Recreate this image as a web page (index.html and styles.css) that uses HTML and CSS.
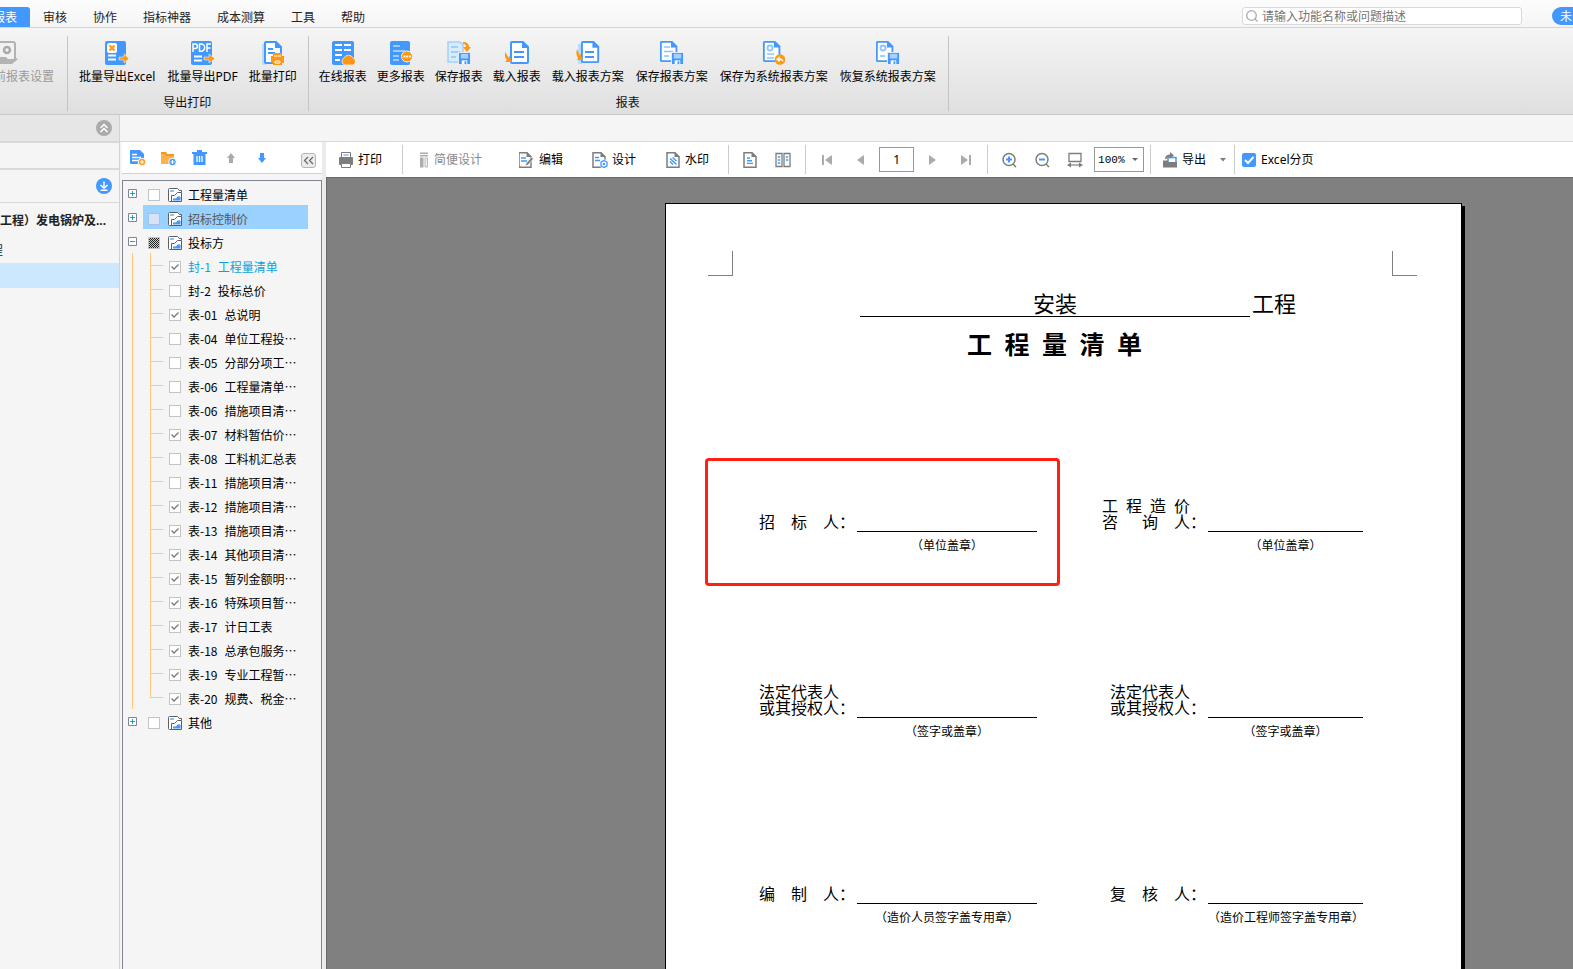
FILE: index.html
```html
<!DOCTYPE html>
<html lang="zh-CN">
<head>
<meta charset="utf-8">
<title>报表</title>
<link rel="stylesheet" href="styles.css">
</head>
<body>
<svg class="defs" aria-hidden="true">
  <symbol id="i-doc" viewBox="0 0 24 24"><path d="M3 1h11l5 5v15a1 1 0 0 1-1 1H3a1 1 0 0 1-1-1V2a1 1 0 0 1 1-1z" fill="#fff" stroke="#4398fd" stroke-width="2"/><path d="M13 0v7h7z" fill="#4398fd"/></symbol>
  <symbol id="i-disk" viewBox="0 0 14 14"><path d="M0 0h14v14H0z" fill="#f0f0f0"/><path d="M1 1h12v12H1z" fill="#4398fd"/><path d="M3 2h8v5H3z" fill="#a5d0ff"/><path d="M4 9h6v4H4z" fill="#fff"/><path d="M7 10h2v3H7z" fill="#4398fd"/></symbol>
  <symbol id="i-page" viewBox="0 0 16 16"><path d="M2 .8h8l4 4v10.400H2z" fill="#fff" stroke="#7d7d7d" stroke-width="1.500"/><path d="M9.500 0v5H15z" fill="#7d7d7d"/></symbol>
  <symbol id="i-chart" viewBox="0 0 14 14"><path d="M13.500 4.500v-2h-2l-2-2h-8a1 1 0 0 0-1 1v11a1 1 0 0 0 1 1h3" fill="#fff" stroke="#5c6066"/><path d="M2 2h4v2H2z" fill="#8cc4ff"/><path d="M3.500 13.500v-6h3l3-3h4v9z" fill="#fff" stroke="#5c6066"/><path d="M5 12.500V10.500h3L9.500 8.500h3v4z" fill="#4398fd"/></symbol>
</svg>

<header class="menubar">
  <nav class="tabs">
    <button class="tab tab-active">报表</button>
    <button class="tab">审核</button>
    <button class="tab">协作</button>
    <button class="tab">指标神器</button>
    <button class="tab">成本测算</button>
    <button class="tab">工具</button>
    <button class="tab">帮助</button>
  </nav>
  <label class="search">
    <svg width="12" height="12" viewBox="0 0 12 12" fill="none" stroke="#aaa" stroke-width="1.300"><circle cx="5.500" cy="5.500" r="4.800"/><path d="M9 9l2.500 2.500"/></svg>
    <input type="text" placeholder="请输入功能名称或问题描述" aria-label="搜索">
  </label>
  <button class="login">未</button>
</header>

<section class="ribbon">
  <div class="group">
    <div class="tools">
      <button class="tool tool-cut" disabled>
        <svg width="24" height="24" viewBox="0 0 24 24"><path d="M4 1h15a2 2 0 0 1 2 2v16H4z" fill="#f2f2f2" stroke="#b3b3b3" stroke-width="2"/><circle cx="13" cy="9" r="3" fill="none" stroke="#aaa" stroke-width="2.500"/><path d="M4 16h8l3 3 7-2 2 1-6 5H4z" fill="#b3b3b3"/></svg>
        <span>前报表设置</span>
      </button>
    </div>
    <div class="caption"></div>
  </div>
  <div class="group">
    <div class="tools">
      <button class="tool wide">
        <svg width="24" height="24" viewBox="0 0 24 24"><rect width="21" height="24" rx="2" fill="#4398fd"/><rect x="2" y="2" width="10" height="10" rx="2" fill="#fff"/><path d="M4.500 4.500l5 5m0-5l-5 5" stroke="#ff9712" stroke-width="2.200"/><path d="M3 14.500h8M3 18.500h8" stroke="#fff" stroke-width="2"/><path d="M14 16h5v-3l5 4.500-5 4.500v-3h-5z" fill="#ff9712" stroke="#fff" stroke-width=".5"/></svg>
        <span>批量导出Excel</span>
      </button>
      <button class="tool wide">
        <svg width="24" height="24" viewBox="0 0 24 24"><rect width="21" height="24" rx="2" fill="#4398fd"/><g fill="none" stroke="#fff" stroke-width="1.500"><path d="M2 11V3h2.200a2.200 2.200 0 0 1 0 4.500H2M8.500 3v7.200h1.600a3.500 3.500 0 0 0 0-7.200zM16 11V3h4M16 7h3.500"/></g><path d="M3 15.500h8M3 19.500h8" stroke="#fff" stroke-width="2"/><path d="M13 16h5v-3l6 4.500-6 4.500v-3h-5z" fill="#ff9712" stroke="#fff" stroke-width=".5"/></svg>
        <span>批量导出PDF</span>
      </button>
      <button class="tool">
        <svg width="24" height="24" viewBox="0 0 24 24"><path d="M1 3h4v21H2a1 1 0 0 1-1-1z" fill="#b9dcff"/><path d="M5 1h10l5 5v16H5a1 1 0 0 1-1-1V2a1 1 0 0 1 1-1z" fill="#fff" stroke="#4398fd" stroke-width="2"/><path d="M14 0v7h7z" fill="#4398fd"/><path d="M7 8h5M7 12h7" stroke="#4398fd" stroke-width="2"/><path d="M12 12h9v3h2v7h-2v2h-9v-2h-2v-7h2z" fill="#ff9712"/><path d="M13 15h7M14 20h5v2h-5z" stroke="#fff" fill="none"/></svg>
        <span>批量打印</span>
      </button>
    </div>
    <div class="caption">导出打印</div>
  </div>
  <div class="group">
    <div class="tools">
      <button class="tool">
        <svg width="24" height="24" viewBox="0 0 24 24"><rect x="1" width="22" height="24" rx="2" fill="#4398fd"/><path d="M4 4h7M13 4h7M4 9h7M13 9h7M4 14h7M4 19h5" stroke="#fff" stroke-width="2"/><path d="M14 24a3.700 3.700 0 0 1-1-7 5 5 0 0 1 9 0 3.700 3.700 0 0 1 0 7z" fill="#ff9712" stroke="#f0f0f0" stroke-width=".8"/></svg>
        <span>在线报表</span>
      </button>
      <button class="tool">
        <svg width="24" height="24" viewBox="0 0 24 24"><rect x="1" width="20" height="24" rx="2" fill="#4398fd"/><path d="M4 5h7M4 10h12M4 15h6M4 19h6" stroke="#b9dcff" stroke-width="1.600"/><circle cx="18" cy="15.500" r="5.500" fill="#ff9712" stroke="#f0f0f0"/><path d="M14.500 15.500h2m.7 0h2m.7 0h2" stroke="#fff" stroke-width="2"/></svg>
        <span>更多报表</span>
      </button>
      <button class="tool">
        <svg width="24" height="24" viewBox="0 0 24 24"><path d="M1 1h12l3 3v17H1z" fill="#d8ecff" stroke="#a5cffb" stroke-width="1.500"/><path d="M4 6h7M4 11h9M4 16h5" stroke="#8cc4ff" stroke-width="1.600"/><path d="M16 1c4 0 6 2 6 5h2l-4 5-4-5h3c0-2-1-3-3-3z" fill="#ff9712"/><use href="#i-disk" x="11" y="11" width="13" height="13"/></svg>
        <span>保存报表</span>
      </button>
      <button class="tool">
        <svg width="24" height="24" viewBox="0 0 24 24"><use href="#i-doc" x="4" width="24" height="24"/><path d="M9 11h10M9 16h10" stroke="#4398fd" stroke-width="2"/><path d="M0 11l4 6V14l3 7H0l2-2c-2-2-3-5-2-8z" fill="#ff9712"/></svg>
        <span>载入报表</span>
      </button>
      <button class="tool wide">
        <svg width="24" height="24" viewBox="0 0 24 24"><path d="M2 3h4v20H2z" fill="#b9dcff"/><use href="#i-doc" x="4" width="23" height="23"/><path d="M9 11h9M9 16h9" stroke="#4398fd" stroke-width="2"/><path d="M1 8l3 7v-3l3 7H1l1-2c-2-3-2-6-1-9z" fill="#ff9712"/></svg>
        <span>载入报表方案</span>
      </button>
      <button class="tool wide">
        <svg width="24" height="24" viewBox="0 0 24 24"><use href="#i-doc" x="-1" width="22" height="22"/><path d="M4 6h6M4 10.500h9M4 15h5" stroke="#8cc4ff" stroke-width="1.600"/><use href="#i-disk" x="11" y="11" width="13" height="13"/></svg>
        <span>保存报表方案</span>
      </button>
      <button class="tool wide">
        <svg width="24" height="24" viewBox="0 0 24 24"><use href="#i-doc" x="0" width="22" height="22"/><circle cx="8" cy="7" r="2.500" fill="none" stroke="#8cc4ff" stroke-width="1.800"/><path d="M5 13h7M5 17h7" stroke="#8cc4ff" stroke-width="1.600"/><circle cx="18" cy="18.500" r="5.300" fill="#ff9712"/><path d="M14 18.200l3.500-3v2c2.500 0 4 1.300 4 4-1-1.500-2-2-4-2v2z" fill="#fff"/></svg>
        <span>保存为系统报表方案</span>
      </button>
      <button class="tool wide">
        <svg width="24" height="24" viewBox="0 0 24 24"><use href="#i-doc" x="-1" width="22" height="22"/><circle cx="7" cy="7" r="2.500" fill="none" stroke="#8cc4ff" stroke-width="1.800"/><path d="M4 15h5" stroke="#8cc4ff" stroke-width="1.600"/><use href="#i-disk" x="11" y="11" width="13" height="13"/></svg>
        <span>恢复系统报表方案</span>
      </button>
    </div>
    <div class="caption">报表</div>
  </div>
</section>

<main class="workspace">
  <aside class="sidebar">
    <div class="side-head">
      <button class="round round-grey" aria-label="收起"><svg width="16" height="16" viewBox="0 0 16 16" fill="none" stroke="#fff" stroke-width="1.500"><path d="M4.500 8L8 4.500 11.500 8M4.500 12L8 8.500l3.500 3.500"/></svg></button>
    </div>
    <div class="side-blank"></div>
    <div class="side-load">
      <button class="round round-blue" aria-label="下载"><svg width="16" height="16" viewBox="0 0 16 16" fill="none" stroke="#fff" stroke-width="1.500"><path d="M8 3.500v6.500M4.500 7L8 10.200 11.500 7M4.500 12.200h7"/></svg></button>
    </div>
    <ul class="projects">
      <li class="project project-root">工程）发电锅炉及...</li>
      <li class="project project-cut">程</li>
      <li class="project project-selected"></li>
    </ul>
  </aside>

  <div class="content">
    <div class="strip"></div>
    <div class="panes">
      <section class="tree-pane">
        <div class="tree-tools">
          <button class="icon-btn" aria-label="新建报表"><svg width="16" height="16" viewBox="0 0 16 16"><path d="M0 0h10l4 4v10H1a1 1 0 0 1-1-1z" fill="#4398fd"/><path d="M2 4.500h5M2 7.500h9M2 10.500h6" stroke="#fff" stroke-width="1.300"/><circle cx="12" cy="12" r="3.800" fill="#ff9712" stroke="#fff"/><path d="M12 10v4M10 12h4" stroke="#fff" stroke-width="1.200"/></svg></button>
          <button class="icon-btn" aria-label="新建文件夹"><svg width="16" height="16" viewBox="0 0 16 16"><path d="M0 2h5l1 2h7v10H0z" fill="#ffb14d"/><path d="M0 2h5l1 2h7v2H5L4 4H0z" fill="#ff9712"/><circle cx="11.500" cy="12" r="3.800" fill="#4398fd" stroke="#fff"/><path d="M11.500 10v4M9.500 12h4" stroke="#fff" stroke-width="1.200"/></svg></button>
          <button class="icon-btn" aria-label="删除"><svg width="16" height="16" viewBox="0 0 16 16" fill="#4398fd"><path d="M0 2h5V0h5v2h5v2H0z"/><path d="M1.500 4h12v11h-12z"/><path d="M5 6v6M7.500 6v6M10 6v6" stroke="#fff" stroke-width="1.300"/></svg></button>
          <button class="icon-btn" aria-label="上移"><svg width="16" height="16" viewBox="0 0 16 16"><path d="M8 3l4 5h-2v5H6V8H4z" fill="#ababab"/></svg></button>
          <button class="icon-btn" aria-label="下移"><svg width="16" height="16" viewBox="0 0 16 16"><path d="M8 13L4 8h2V3h4v5h2z" fill="#4398fd"/></svg></button>
          <button class="collapse" aria-label="折叠"><svg width="13" height="13" viewBox="0 0 13 13" fill="none" stroke="#666" stroke-width="1.200"><path d="M6 3L2.500 6.500 6 10M11 3L7.500 6.500 11 10"/></svg></button>
        </div>
        <div class="tree">
          <div class="node"><button class="expander" aria-label="展开"><svg width="9" height="9" viewBox="0 0 9 9"><path d="M.5.5h8v8h-8z" fill="#fff" stroke="#7f8794"/><path d="M2 4.500h5M4.500 2v5" stroke="#18a5d6"/></svg></button><label class="node-label"><input type="checkbox" class="tick"><svg width="14" height="14"><use href="#i-chart"/></svg><span>工程量清单</span></label></div>
          <div class="node node-selected"><button class="expander" aria-label="展开"><svg width="9" height="9" viewBox="0 0 9 9"><path d="M.5.5h8v8h-8z" fill="#fff" stroke="#7f8794"/><path d="M2 4.500h5M4.500 2v5" stroke="#18a5d6"/></svg></button><label class="node-label"><input type="checkbox" class="tick"><svg width="14" height="14"><use href="#i-chart"/></svg><span>招标控制价</span></label></div>
          <div class="node"><button class="expander" aria-label="折叠"><svg width="9" height="9" viewBox="0 0 9 9"><path d="M.5.5h8v8h-8z" fill="#fff" stroke="#7f8794"/><path d="M2 4.500h5" stroke="#18a5d6"/></svg></button><label class="node-label"><input type="checkbox" class="tick tick-mixed"><svg width="14" height="14"><use href="#i-chart"/></svg><span>投标方</span></label></div>
          <ul class="leaves">
            <li><label class="leaf leaf-current"><input type="checkbox" class="tick" checked><span>封-1</span> <span>工程量清单</span></label></li>
            <li><label class="leaf"><input type="checkbox" class="tick"><span>封-2</span> <span>投标总价</span></label></li>
            <li><label class="leaf"><input type="checkbox" class="tick" checked><span>表-01</span> <span>总说明</span></label></li>
            <li><label class="leaf"><input type="checkbox" class="tick"><span>表-04</span> <span>单位工程投…</span></label></li>
            <li><label class="leaf"><input type="checkbox" class="tick"><span>表-05</span> <span>分部分项工…</span></label></li>
            <li><label class="leaf"><input type="checkbox" class="tick"><span>表-06</span> <span>工程量清单…</span></label></li>
            <li><label class="leaf"><input type="checkbox" class="tick"><span>表-06</span> <span>措施项目清…</span></label></li>
            <li><label class="leaf"><input type="checkbox" class="tick" checked><span>表-07</span> <span>材料暂估价…</span></label></li>
            <li><label class="leaf"><input type="checkbox" class="tick"><span>表-08</span> <span>工料机汇总表</span></label></li>
            <li><label class="leaf"><input type="checkbox" class="tick"><span>表-11</span> <span>措施项目清…</span></label></li>
            <li><label class="leaf"><input type="checkbox" class="tick" checked><span>表-12</span> <span>措施项目清…</span></label></li>
            <li><label class="leaf"><input type="checkbox" class="tick" checked><span>表-13</span> <span>措施项目清…</span></label></li>
            <li><label class="leaf"><input type="checkbox" class="tick" checked><span>表-14</span> <span>其他项目清…</span></label></li>
            <li><label class="leaf"><input type="checkbox" class="tick" checked><span>表-15</span> <span>暂列金额明…</span></label></li>
            <li><label class="leaf"><input type="checkbox" class="tick" checked><span>表-16</span> <span>特殊项目暂…</span></label></li>
            <li><label class="leaf"><input type="checkbox" class="tick" checked><span>表-17</span> <span>计日工表</span></label></li>
            <li><label class="leaf"><input type="checkbox" class="tick" checked><span>表-18</span> <span>总承包服务…</span></label></li>
            <li><label class="leaf"><input type="checkbox" class="tick" checked><span>表-19</span> <span>专业工程暂…</span></label></li>
            <li><label class="leaf"><input type="checkbox" class="tick" checked><span>表-20</span> <span>规费、税金…</span></label></li>
          </ul>
          <div class="node"><button class="expander" aria-label="展开"><svg width="9" height="9" viewBox="0 0 9 9"><path d="M.5.5h8v8h-8z" fill="#fff" stroke="#7f8794"/><path d="M2 4.500h5M4.500 2v5" stroke="#18a5d6"/></svg></button><label class="node-label"><input type="checkbox" class="tick"><svg width="14" height="14"><use href="#i-chart"/></svg><span>其他</span></label></div>
        </div>
      </section>

      <section class="viewer">
        <div class="toolbar">
          <div class="bar-group bar-print">
            <button class="bar-btn"><svg width="16" height="16" viewBox="0 0 16 16"><path d="M3.500.5h9v5h-9z" fill="#fff" stroke="#7d7d7d"/><path d="M5.500 3h5" stroke="#4398fd"/><rect x="1" y="5" width="14" height="8" rx="1" fill="#7d7d7d"/><path d="M3.500 11.500h9v4h-9z" fill="#fff" stroke="#7d7d7d"/></svg>打印</button>
          </div>
          <div class="bar-group bar-edit">
            <button class="bar-btn bar-first" disabled><svg width="16" height="16" viewBox="0 0 16 16"><path d="M6 .5h8v1.500H6zM6 3h8v1.500H6zM6 5.500h3.500v10H6z" fill="#ababab"/><path d="M11 6h2.500v9H11z" fill="#eee" stroke="#bbb"/></svg>简便设计</button>
            <button class="bar-btn"><svg width="16" height="16" viewBox="0 0 16 16"><use href="#i-page" x="-2" width="16" height="16"/><path d="M2 6h5M2 9h6" stroke="#4398fd" stroke-width="1.400"/><path d="M7 11.500L12.500 5l2 1.800L9 13l-3 1z" fill="#7d7d7d" stroke="#fff" stroke-width=".7"/></svg>编辑</button>
            <button class="bar-btn"><svg width="16" height="16" viewBox="0 0 16 16"><use href="#i-page" x="-1" width="16" height="16"/><path d="M3 5.500h4M3 8.500h5" stroke="#4398fd" stroke-width="1.400"/><circle cx="12" cy="12" r="4.500" fill="#fff"/><path d="M12 8.500l3 1.700v3.600l-3 1.700-3-1.700v-3.600z" fill="#fff" stroke="#4398fd" stroke-width="1.300"/><circle cx="12" cy="12" r="1.200" fill="#4398fd"/></svg>设计</button>
            <button class="bar-btn"><svg width="16" height="16" viewBox="0 0 16 16"><use href="#i-page" width="16" height="16"/><path d="M5 6.500l6.500 6M5 9.500l3 3M7.500 5.500l4 3.500" stroke="#4398fd" stroke-width="1.500"/></svg>水印</button>
          </div>
          <div class="bar-group bar-view">
            <button class="icon-btn" aria-label="单页"><svg width="16" height="16" viewBox="0 0 16 16"><use href="#i-page" width="16" height="16"/><path d="M5 6h3M5 8.700h5M5 11.400h6" stroke="#4398fd" stroke-width="1.400"/></svg></button>
            <button class="icon-btn" aria-label="双页"><svg width="16" height="16" viewBox="0 0 16 16"><path d="M1 1.500h6v13H1zM9 1.500h6v13H9z" fill="#fff" stroke="#7d7d7d" stroke-width="1.300"/><path d="M2.800 5h2.400M2.800 8h2.400M2.800 11h2.400M10.800 5h2.400M10.800 8h2.400" stroke="#4398fd" stroke-width="1.300"/></svg></button>
          </div>
          <div class="bar-group bar-pages">
            <button class="icon-btn" aria-label="首页"><svg width="16" height="16" viewBox="0 0 16 16" fill="#ababab"><path d="M3 3h2v10H3zM13 3v10L6 8z"/></svg></button>
            <button class="icon-btn" aria-label="上一页"><svg width="16" height="16" viewBox="0 0 16 16" fill="#ababab"><path d="M12 3v10L5 8z"/></svg></button>
            <input class="page-no" type="text" value="1" aria-label="页码">
            <button class="icon-btn" aria-label="下一页"><svg width="16" height="16" viewBox="0 0 16 16" fill="#ababab"><path d="M4 3v10l7-5z"/></svg></button>
            <button class="icon-btn" aria-label="末页"><svg width="16" height="16" viewBox="0 0 16 16" fill="#ababab"><path d="M3 3v10l7-5zM11 3h2v10h-2z"/></svg></button>
          </div>
          <div class="bar-group bar-zoom">
            <button class="icon-btn" aria-label="放大"><svg width="16" height="16" viewBox="0 0 16 16" fill="none" stroke="#7d7d7d" stroke-width="1.500"><circle cx="8" cy="7.500" r="6"/><path d="M12 12l3 3"/><path d="M5 7.500h6M8 4.500v6" stroke="#4398fd" stroke-width="2"/></svg></button>
            <button class="icon-btn" aria-label="缩小"><svg width="16" height="16" viewBox="0 0 16 16" fill="none" stroke="#7d7d7d" stroke-width="1.500"><circle cx="8" cy="7.500" r="6"/><path d="M12 12l3 3"/><path d="M5 7.500h6" stroke="#4398fd" stroke-width="2"/></svg></button>
            <button class="icon-btn" aria-label="适合宽度"><svg width="16" height="16" viewBox="0 0 16 16"><path d="M2 1.500h12v8H2z" fill="#fff" stroke="#7d7d7d" stroke-width="1.300"/><path d="M0 13l4-2.500v5zM16 13l-4-2.500v5z" fill="#7d7d7d"/><path d="M3 13h10" stroke="#7d7d7d" stroke-width="1.200"/></svg></button>
            <select class="zoom" aria-label="缩放"><option>100%</option></select>
          </div>
          <div class="bar-group bar-export">
            <button class="bar-btn"><svg width="16" height="16" viewBox="0 0 16 16"><path d="M6 9V5.500h8V10" fill="none" stroke="#4398fd" stroke-width="1.500"/><path d="M3 7c0-3 2-4.500 5-4.500V0l4 3.500L8 6.500V4.700C6 4.700 5 5.500 4.500 7z" fill="#7d7d7d"/><path d="M1 8.500h5l1 1.500h8v5.500H1z" fill="#7d7d7d"/></svg>导出</button>
            <button class="caret" aria-label="更多导出"><svg width="6" height="4" viewBox="0 0 6 4"><path d="M0 0h6L3 3.500z" fill="#7d7d7d"/></svg></button>
          </div>
          <label class="bar-excel"><input type="checkbox" checked>Excel分页</label>
        </div>

        <div class="desk">
          <article class="paper">
            <div class="marks"><i class="mark mark-left"></i><i class="mark mark-right"></i></div>
            <div class="subject"><span class="subject-name">安装</span><span>工程</span></div>
            <h1 class="title">工&ensp;程&ensp;量&ensp;清&ensp;单</h1>
            <div class="signs">
              <div class="role">招　标　人：</div>
              <div class="line"></div>
              <div class="role role-right">工&ensp;程&ensp;造&ensp;价<br>咨　&ensp;询　人：</div>
              <div class="line"></div>
              <div class="note note-left">（单位盖章）</div>
              <div class="note note-right">（单位盖章）</div>

              <div class="role">法定代表人<br>或其授权人：</div>
              <div class="line"></div>
              <div class="role role-right">法定代表人<br>或其授权人：</div>
              <div class="line"></div>
              <div class="note note-left">（签字或盖章）</div>
              <div class="note note-right">（签字或盖章）</div>

              <div class="role">编　制　人：</div>
              <div class="line"></div>
              <div class="role role-right">复　核　人：</div>
              <div class="line"></div>
              <div class="note note-left">（造价人员签字盖专用章）</div>
              <div class="note note-right">（造价工程师签字盖专用章）</div>
            </div>
            <div class="highlight"></div>
          </article>
        </div>
      </section>
    </div>
  </div>
</main>
</body>
</html>
```

FILE: styles.css
```css
* { box-sizing: border-box; }

body {
  margin: 0;
  height: 100vh;
  overflow: hidden;
  display: flex;
  flex-direction: column;
  background: #f5f5f5;
  color: #000;
  font: 12px/16px "Noto Sans", "Noto Sans CJK SC", sans-serif;
}

button, input, select { font: inherit; color: inherit; }
button { padding: 0; border: 0; background: none; white-space: nowrap; }
ul { list-style: none; margin: 0; padding: 0; }
svg { display: block; flex: none; }
.defs { position: absolute; width: 0; height: 0; }

/* Menu bar */
.menubar {
  flex: none;
  display: flex;
  align-items: flex-end;
  height: 28px;
  border-bottom: 1px solid #d5d5d5;
  background: linear-gradient(#fcfcfc, #f5f5f5);
}
.tabs { flex: 1; display: flex; }
.tab { height: 20px; padding: 2px 13px 0; color: #222; }
.tab-active {
  margin-left: -20px;
  border-radius: 3px 3px 0 0;
  background: #4398fd;
  color: #fff;
}
.search {
  display: flex;
  align-items: center;
  gap: 4px;
  width: 280px;
  height: 18px;
  margin: 0 30px 2px 0;
  padding-left: 3px;
  border: 1px solid #d9d9d9;
  border-radius: 3px;
  background: #fff;
}
.search input { flex: 1; min-width: 0; height: 16px; padding: 1px 0 0; border: 0; outline: 0; background: none; }
.search input::placeholder { color: #757575; opacity: 1; }
.login {
  width: 21px;
  height: 18px;
  margin-bottom: 2px;
  padding: 1px 0 0 8px;
  border-radius: 9px 0 0 9px;
  background: #4398fd;
  color: #fff;
  text-align: left;
}

/* Ribbon */
.ribbon {
  flex: none;
  display: flex;
  height: 87px;
  padding: 8px 0 3px;
  border-bottom: 1px solid #c9c9c9;
  background: linear-gradient(#f5f5f5, #dfdfdf);
}
.group {
  display: flex;
  flex-direction: column;
  padding: 5px 6px 0 5px;
  border-right: 1px solid #c4c4c4;
}
.group:first-child { padding: 5px 13px 0 0; }
.tools { display: flex; }
.tool {
  display: flex;
  flex-direction: column;
  align-items: center;
  gap: 4px;
  padding: 0 5px;
}
.tool.wide { padding: 0 6px; }
.tool-cut { align-items: flex-start; margin-left: -6px; padding: 0; color: #9a9a9a; }
.caption { margin-top: 10px; text-align: center; color: #111; }

/* Workspace */
.workspace { flex: 1; min-height: 0; display: flex; }
.sidebar { flex: none; width: 120px; border-right: 1px solid #d2d2d2; }
.side-head, .side-load { display: flex; align-items: center; justify-content: flex-end; padding-right: 7px; }
.side-head { height: 28px; border-bottom: 2px solid #d9d9d9; background: #e6e6e6; }
.side-blank { height: 27px; border-bottom: 2px solid #d9d9d9; }
.side-load { height: 33px; border-bottom: 1px solid #d9d9d9; }
.round { width: 16px; height: 16px; border-radius: 8px; }
.round-grey { background: #ababab; }
.round-blue { background: #4398fd; }
.project { height: 25px; line-height: 26px; white-space: nowrap; overflow: hidden; color: #222; }
.project-root { height: 35px; line-height: 36px; font-weight: bold; }
.project-cut { width: 3px; direction: rtl; }
.project-selected { background: #cce8ff; }

.content { flex: 1; min-width: 0; display: flex; flex-direction: column; }
.strip { flex: none; height: 27px; border-bottom: 1px solid #d9d9d9; }
.panes { flex: 1; min-height: 0; display: flex; }

/* Report tree */
.tree-pane {
  flex: none;
  display: flex;
  flex-direction: column;
  width: 206px;
  padding-left: 2px;
  border-right: 4px solid #ebebeb;
}
.tree-tools {
  flex: none;
  display: flex;
  align-items: center;
  gap: 15px;
  height: 32px;
  padding: 0 6px 0 8px;
  border-bottom: 1px solid #d2d2d2;
  background: #fff;
}
.icon-btn { width: 16px; height: 16px; }
.collapse {
  width: 15px;
  height: 15px;
  margin: 6px 0 0 auto;
  border: 1px solid #b5b5b5;
  border-radius: 3px;
  background: #ececec;
}
.tree {
  flex: 1;
  margin-top: 6px;
  border: 1px solid #808590;
  border-bottom: 0;
  font-family: "Noto Sans CJK SC", sans-serif;
}
.node { display: flex; height: 24px; padding-left: 5px; }
.expander { width: 9px; height: 9px; margin: 8px 6px 0 0; }
.node-label {
  display: flex;
  align-items: center;
  width: 165px;
  padding: 4px 0 0 5px;
  line-height: 20px;
}
.node-label svg { margin: 0 6px 0 8px; }
.node-selected .node-label { background: #99d1ff; color: #555; }
.node-selected .tick { background-color: #d6e2f5; border-color: #a9bfe6; }
.tick {
  flex: none;
  appearance: none;
  width: 12px;
  height: 12px;
  margin: 0;
  border: 1px solid #c3c3c3;
  background-color: #fff;
}
.tick:checked {
  background-image: url("data:image/svg+xml,%3Csvg xmlns='http://www.w3.org/2000/svg' viewBox='0 0 10 10'%3E%3Cpath d='M1.500 4.500l2.500 2.500 4.500-4.500' fill='none' stroke='%23777' stroke-width='1.300'/%3E%3C/svg%3E");
}
.tick-mixed { background: repeating-conic-gradient(#222 0 25%, #ccc 0 50%) 0 0 / 2px 2px; }

/* Branch lines: outer trunk, inner trunk, one short arm per 24px row */
.leaves {
  background:
    linear-gradient(#ffc87d, #ffc87d) 9px 0 / 1px 100% no-repeat,
    linear-gradient(#ffc87d, #ffc87d) 27px 0 / 1px calc(100% - 12px) no-repeat,
    linear-gradient(transparent 12px, #ffc87d 12px, #ffc87d 13px, transparent 13px) 27px 0 / 13px 24px repeat-y;
}
.leaf {
  display: flex;
  align-items: center;
  gap: 7px;
  height: 24px;
  padding: 4px 0 0 46px;
  line-height: 20px;
  white-space: nowrap;
}
.leaf-current { color: #0ca2d8; }

/* Viewer */
.viewer { flex: 1; min-width: 0; display: flex; flex-direction: column; }
.toolbar { flex: none; display: flex; align-items: center; height: 35px; background: #fff; }
.bar-group {
  display: flex;
  align-items: center;
  height: 29px;
  border-right: 1px solid #ccc;
}
.bar-btn { display: flex; align-items: center; gap: 4px; }
.bar-btn:disabled { color: #8a8a8a; }
.bar-first { margin-right: 8px; }
.bar-print { padding: 0 20px 0 12px; }
.bar-edit { gap: 29px; padding: 0 19px 0 11px; }
.bar-view { gap: 17px; padding: 0 14px 0 13px; }
.bar-pages { gap: 17px; padding: 0 13px 0 13px; }
.bar-zoom { gap: 17px; padding: 0 6px 0 13px; }
.bar-export { gap: 14px; padding: 0 8px 0 11px; }
.page-no {
  width: 35px;
  height: 25px;
  margin: 0 -6px;
  padding: 0;
  border: 1px solid #999;
  background: #fff;
  text-align: center;
}
.zoom {
  appearance: none;
  width: 50px;
  height: 25px;
  margin-left: -6px;
  padding: 0 0 0 3px;
  border: 1px solid #999;
  border-radius: 0;
  background: #fff url("data:image/svg+xml,%3Csvg xmlns='http://www.w3.org/2000/svg' viewBox='0 0 6 4'%3E%3Cpath d='M0 0h6L3 3z' fill='%23666'/%3E%3C/svg%3E") right 5px center / 6px 4px no-repeat;
  font: 11px/16px "Liberation Mono", monospace;
}
.bar-excel { display: flex; align-items: center; gap: 5px; padding-left: 7px; white-space: nowrap; }
.bar-excel input {
  appearance: none;
  width: 14px;
  height: 14px;
  margin: 0;
  border-radius: 2px;
  background: #4398fd url("data:image/svg+xml,%3Csvg xmlns='http://www.w3.org/2000/svg' viewBox='0 0 14 14'%3E%3Cpath d='M3 7l3 3 5.500-6' fill='none' stroke='%23fff' stroke-width='2'/%3E%3C/svg%3E");
}

.desk {
  flex: 1;
  min-height: 0;
  overflow: hidden;
  padding: 25px 0 0 338px;
  border-top: 1px solid #696969;
  border-left: 1px solid #696969;
  background: #808080;
}
.paper {
  position: relative;
  width: 797px;
  min-height: 1123px;
  padding: 47px 44px 0 42px;
  border: 1px solid #000;
  background: #fff;
  box-shadow: 3px 3px 0 #000;
  font-family: "Noto Sans CJK SC", sans-serif;
}
.marks { display: flex; justify-content: space-between; }
.mark { width: 25px; height: 25px; border: 0 solid #808080; border-bottom-width: 1px; }
.mark-left { border-right-width: 1px; }
.mark-right { border-left-width: 1px; }
.subject {
  display: flex;
  gap: 2px;
  margin: 12px 0 0 152px;
  font-size: 22px;
  line-height: 28px;
}
.subject-name { width: 390px; border-bottom: 1px solid #000; text-align: center; }
.title { margin: 8px 0 0; padding-right: 16px; font-size: 25px; line-height: 36px; text-align: center; }

.signs {
  display: grid;
  grid-template-columns: 98px 180px 171px 155px;
  grid-template-rows: repeat(3, 165px 21px);
  margin-top: 6px;
  padding-left: 51px;
}
.role { align-self: end; padding-bottom: 3px; font-size: 16px; line-height: 16px; white-space: nowrap; }
.role-right { justify-self: end; padding-right: 2px; }
.line { border-bottom: 1px solid #000; }
.note { align-self: end; line-height: 16px; text-align: center; white-space: nowrap; }
.note-left { grid-column: 2; }
.note-right { grid-column: 4; }

.highlight {
  position: absolute;
  left: 39px;
  top: 254px;
  width: 355px;
  height: 128px;
  border: 3px solid #ff2010;
  border-radius: 4px;
}
```
